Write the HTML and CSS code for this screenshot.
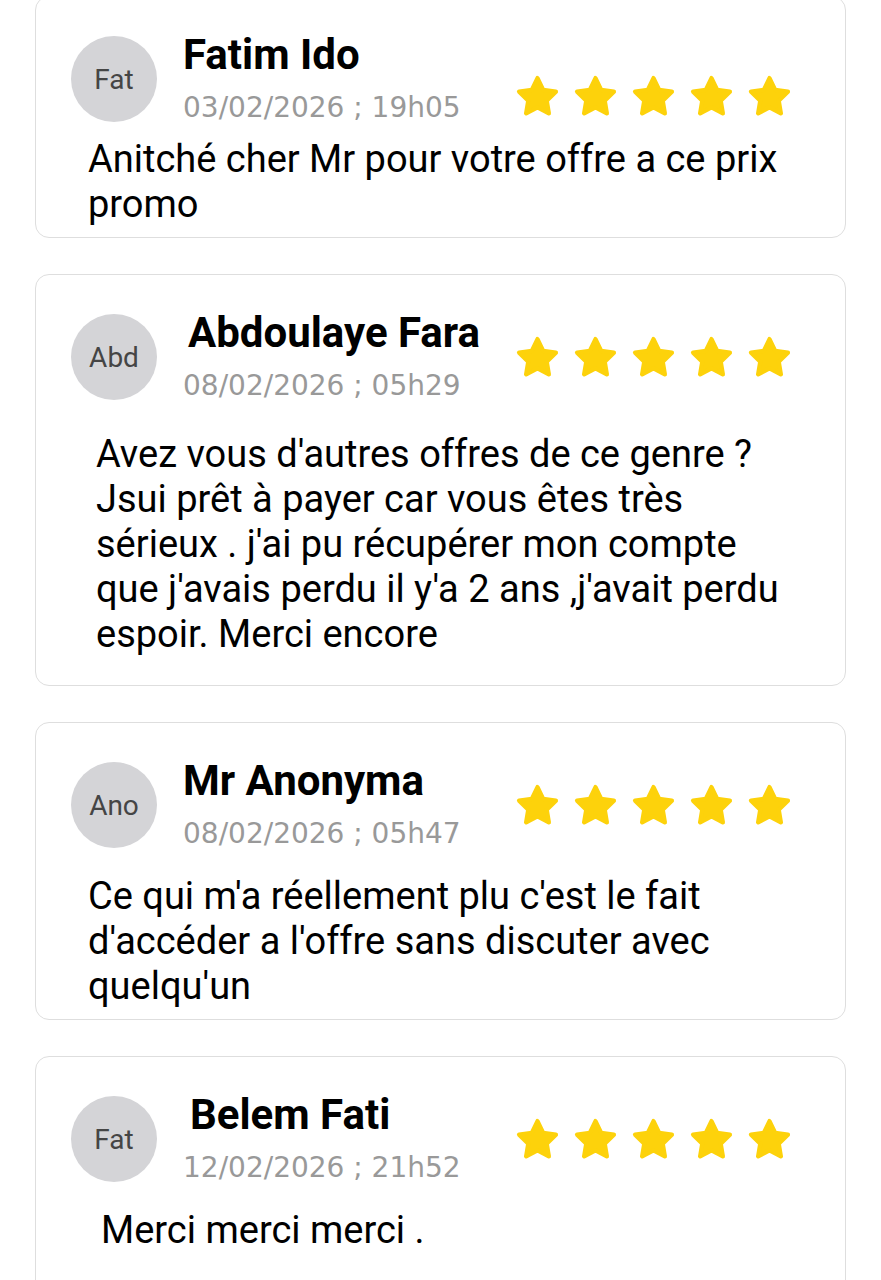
FILE: index.html
```html
<!DOCTYPE html>
<html lang="fr">
<head>
  <meta charset="UTF-8" />
  <meta name="viewport" content="width=device-width, initial-scale=1.0"/>
  <title>Avis clients</title>
  <link rel="stylesheet" href="styles.css">
</head>
<body>

  <svg width="0" height="0" class="defs">
    <symbol id="star" viewBox="0 0 24 24">
      <polygon points="12,2.6 14.9,8.6 21.4,9.5 16.7,14.1 17.8,20.6 12,17.5 6.2,20.6 7.3,14.1 2.6,9.5 9.1,8.6"
        fill="#fdd20b" stroke="#fdd20b" stroke-width="2.2" stroke-linejoin="round" />
    </symbol>
  </svg>

  <div class="reviews">

    <div class="review review--first">
      <div class="review-head">
        <div class="avatar">Fat</div>
        <div class="who">
          <div class="name">Fatim Ido</div>
          <div class="date">03/02/2026 ; 19h05</div>
        </div>
        <div class="stars">
          <svg><use href="#star"/></svg><svg><use href="#star"/></svg><svg><use href="#star"/></svg><svg><use href="#star"/></svg><svg><use href="#star"/></svg>
        </div>
      </div>
      <p class="text">Anitché cher Mr pour votre offre a ce prix promo</p>
    </div>

    <div class="review review--long">
      <div class="review-head">
        <div class="avatar">Abd</div>
        <div class="who">
          <div class="name">Abdoulaye Fara</div>
          <div class="date">08/02/2026 ; 05h29</div>
        </div>
        <div class="stars">
          <svg><use href="#star"/></svg><svg><use href="#star"/></svg><svg><use href="#star"/></svg><svg><use href="#star"/></svg><svg><use href="#star"/></svg>
        </div>
      </div>
      <p class="text">Avez vous d'autres offres de ce genre ? Jsui prêt à payer car vous êtes très sérieux . j'ai pu récupérer mon compte que j'avais perdu il y'a 2 ans ,j'avait perdu espoir. Merci encore</p>
    </div>

    <div class="review">
      <div class="review-head">
        <div class="avatar">Ano</div>
        <div class="who">
          <div class="name">Mr Anonyma</div>
          <div class="date">08/02/2026 ; 05h47</div>
        </div>
        <div class="stars">
          <svg><use href="#star"/></svg><svg><use href="#star"/></svg><svg><use href="#star"/></svg><svg><use href="#star"/></svg><svg><use href="#star"/></svg>
        </div>
      </div>
      <p class="text">Ce qui m'a réellement plu c'est le fait d'accéder a l'offre sans discuter avec quelqu'un</p>
    </div>

    <div class="review review--last">
      <div class="review-head">
        <div class="avatar">Fat</div>
        <div class="who">
          <div class="name">Belem Fati</div>
          <div class="date">12/02/2026 ; 21h52</div>
        </div>
        <div class="stars">
          <svg><use href="#star"/></svg><svg><use href="#star"/></svg><svg><use href="#star"/></svg><svg><use href="#star"/></svg><svg><use href="#star"/></svg>
        </div>
      </div>
      <p class="text">Merci merci merci .</p>
    </div>

  </div>

</body>
</html>
```

FILE: styles.css
```css
body {
  margin: 0;
  background-color: #ffffff;
  font-family: Roboto, "Liberation Sans", Arial, sans-serif;
  color: #111;
  overflow: hidden;
}

.defs {
  position: absolute;
}

.reviews {
  display: flex;
  flex-direction: column;
  gap: 36px;
  padding: 0 35px;
  margin-top: -4px;
}

.review {
  border: 1.5px solid #dedede;
  border-radius: 14px;
  padding: 35px 0 10px;
}

.review-head {
  display: flex;
  align-items: center;
  padding-left: 35px;
}

.avatar {
  width: 86px;
  height: 86px;
  border-radius: 50%;
  background-color: #d4d4d7;
  color: #454545;
  font-size: 28px;
  display: flex;
  align-items: center;
  justify-content: center;
  flex-shrink: 0;
}

.who {
  margin-left: 26px;
  display: flex;
  flex-direction: column;
  gap: 12px;
}

.name {
  font-size: 42px;
  font-weight: 700;
  line-height: 46px;
  color: #000;
}

.date {
  font-family: "DejaVu Sans", "Open Sans", sans-serif;
  font-size: 28px;
  line-height: 36px;
  color: #999999;
}

.stars {
  margin-left: auto;
  margin-right: 52px;
  display: flex;
  gap: 11px;
}

.stars svg {
  width: 47px;
  height: 47px;
}

.text {
  margin: 22px 0 0;
  padding: 0 40px 0 52px;
  font-size: 38px;
  line-height: 45px;
  color: #000;
}

.review--first .stars {
  margin-top: 34px;
}

.review--first .text {
  margin-top: 11px;
}

.review--long {
  padding-bottom: 28px;
}

.review--long .text {
  margin-top: 28px;
  padding-left: 60px;
}

.review--long .name {
  margin-left: 5px;
}

.review--last .name {
  margin-left: 7px;
}

.review--last .text {
  padding-left: 65px;
  padding-bottom: 40px;
}
```
